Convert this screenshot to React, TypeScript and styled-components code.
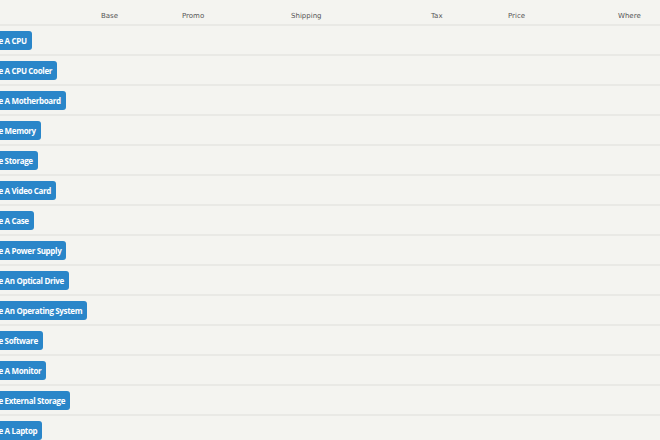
import styled, { createGlobalStyle } from 'styled-components';

const GlobalStyle = createGlobalStyle`
  html, body {
    margin: 0;
    padding: 0;
    background-color: #f4f4f0;
    overflow: hidden;
  }
`;

const Page = styled.div`
  width: 660px;
  height: 440px;
  overflow: hidden;
  background-color: #f4f4f0;
  font-family: Tahoma, "DejaVu Sans", Verdana, sans-serif;
`;

const Table = styled.div`
  margin-left: -29px;
  display: grid;
  grid-template-columns: 130px 81px 109px 140px 77px 110px 42px;
`;

interface ICell {
  Header?: boolean;
}

const Cell = styled.div<ICell>`
  height: ${(props) => (props.Header ? '26px' : '30px')};
  box-sizing: border-box;
  border-bottom: 2px solid #e9e9e5;
  display: flex;
  align-items: center;
  font-size: 7px;
  color: #555;
  padding-top: ${(props) => (props.Header ? '8px' : '1px')};
`;

const ButtonCell = styled(Cell)`
  padding-left: 0;
`;

const ChooseButton = styled.a`
  display: inline-block;
  height: 19px;
  line-height: 19px;
  padding: 0 5px;
  border-radius: 3px;
  background-color: #2a86c9;
  color: #fff;
  font-family: "Open Sans", "DejaVu Sans", sans-serif;
  font-weight: bold;
  font-size: 8px;
  letter-spacing: -0.35px;
  white-space: nowrap;
  text-decoration: none;
`;

const headers = ['', 'Base', 'Promo', 'Shipping', 'Tax', 'Price', 'Where'];

const parts = [
  'Choose A CPU',
  'Choose A CPU Cooler',
  'Choose A Motherboard',
  'Choose Memory',
  'Choose Storage',
  'Choose A Video Card',
  'Choose A Case',
  'Choose A Power Supply',
  'Choose An Optical Drive',
  'Choose An Operating System',
  'Choose Software',
  'Choose A Monitor',
  'Choose External Storage',
  'Choose A Laptop',
];

export default function App() {
  return (
    <Page>
      <GlobalStyle />
      <Table>
        {headers.map((h, i) => (
          <Cell Header key={'h' + i}>
            {h}
          </Cell>
        ))}
        {parts.map((p) => (
          <>
            <ButtonCell key={p}>
              <ChooseButton href="#">{p}</ChooseButton>
            </ButtonCell>
            {headers.slice(1).map((h) => (
              <Cell key={p + h} />
            ))}
          </>
        ))}
      </Table>
    </Page>
  );
}
